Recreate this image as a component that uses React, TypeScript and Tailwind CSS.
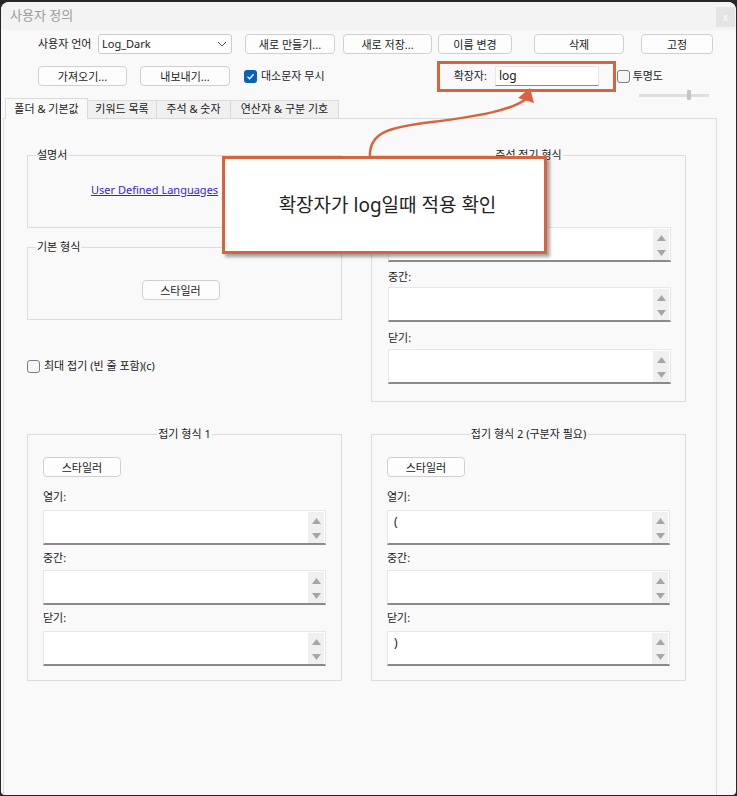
import type { ReactNode } from 'react'

const FONT = "font-['Noto_Sans','Noto_Sans_CJK_KR',sans-serif]"

function Btn({ children, className = '' }: { children: ReactNode; className?: string }) {
  return (
    <div
      className={`h-[20px] shrink-0 flex items-center justify-center bg-[#fdfdfd] border border-[#d0d0d0] rounded-[4px] text-[11px] leading-none text-[#1b1b1b] ${className}`}
    >
      {children}
    </div>
  )
}

function Check({ checked }: { checked?: boolean }) {
  if (checked) {
    return (
      <div className="w-[13px] h-[13px] shrink-0 rounded-[3px] bg-[#0b5fb5] flex items-center justify-center">
        <svg width="9" height="9" viewBox="0 0 9 9">
          <path d="M1.5 4.8 L3.6 6.8 L7.6 2.2" stroke="white" strokeWidth="1.3" fill="none" />
        </svg>
      </div>
    )
  }
  return <div className="w-[13px] h-[13px] shrink-0 rounded-[3px] bg-[#f6f6f6] border border-[#7c7c7c]" />
}

// multi-line edit with its little spin column
function Edit({ value = '' }: { value?: string }) {
  return (
    <div className="flex w-[283px] h-[35px] bg-white border border-[#e6e6e6] border-b-[#8a8a8a] border-b-[2px]">
      <div className="flex-1 pl-[6px] pt-[3px] text-[12px] leading-[16px] text-[#1b1b1b]">{value}</div>
      <div className="w-[16px] mt-[1px] mr-[1px] bg-[#f0f0f0] flex flex-col items-center pt-[6px] gap-[9px]">
        <svg width="9" height="6" viewBox="0 0 9 6">
          <path d="M4.5 0 L9 6 H0 Z" fill="#a6a6a6" />
        </svg>
        <svg width="9" height="6" viewBox="0 0 9 6">
          <path d="M0 0 H9 L4.5 6 Z" fill="#a6a6a6" />
        </svg>
      </div>
    </div>
  )
}

function Label({ children, className = '' }: { children?: ReactNode; className?: string }) {
  return <div className={`h-[16px] leading-[16px] text-[11px] text-[#1b1b1b] ${className}`}>{children}</div>
}

function FoldGroup({ title, open = '', close = '' }: { title: string; open?: string; close?: string }) {
  return (
    <fieldset className="w-[315px] h-[255px] border border-[#dcdcdc]">
      <legend className="mx-auto px-[1px] leading-[16px] text-[11px] text-[#1b1b1b]">{title}</legend>
      <div className="pl-[15px] flex flex-col">
        <Btn className="w-[78px] mt-[15px]">스타일러</Btn>
        <Label className="mt-[12px]">열기:</Label>
        <div className="mt-[5px]">
          <Edit value={open} />
        </div>
        <Label className="mt-[5px]">중간:</Label>
        <div className="mt-[4px]">
          <Edit />
        </div>
        <Label className="mt-[5px]">닫기:</Label>
        <div className="mt-[5px]">
          <Edit value={close} />
        </div>
      </div>
    </fieldset>
  )
}

export default function App() {
  const tabs = ['키워드 목록', '주석 & 숫자', '연산자 & 구분 기호']
  const tabW = ['w-[69px]', 'w-[74px]', 'w-[108px]']

  return (
    <div className={`relative w-[737px] h-[796px] bg-[#262626] pt-[2px] px-[1px] overflow-hidden ${FONT}`}>
      <div className="h-[793px] bg-[#f9f9f9] rounded-t-[8px] rounded-b-[4px] flex flex-col overflow-hidden">
        {/* title bar */}
        <div className="h-[28px] bg-[#f3f3f3] flex items-start justify-between">
          <div className="pl-[9px] pt-[4px] text-[13px] leading-[18px] text-[#9b9b9b]">사용자 정의</div>
          <div className="mt-[5px] mr-[1px] w-[19px] h-[20px] bg-[#e4e4e4] flex items-center justify-center text-[10px] text-white leading-none">
            x
          </div>
        </div>

        {/* row 1 */}
        <div className="mt-[4px] h-[20px] flex items-center">
          <div className="ml-[37px] w-[59px] text-[11px] text-[#1b1b1b]">사용자 언어</div>
          <div className="ml-[1px] w-[134px] h-[20px] bg-white border border-[#cbcbcb] rounded-[3px] flex items-center justify-between pl-[3px] pr-[4px]">
            <span className="text-[11px] text-[#1b1b1b]">Log_Dark</span>
            <svg width="10" height="6" viewBox="0 0 10 6">
              <path d="M1 1 L5 5 L9 1" stroke="#555" strokeWidth="1" fill="none" />
            </svg>
          </div>
          <Btn className="ml-[13px] w-[90px]">새로 만들기...</Btn>
          <Btn className="ml-[8px] w-[89px]">새로 저장...</Btn>
          <Btn className="ml-[6px] w-[74px]">이름 변경</Btn>
          <Btn className="ml-[22px] w-[90px]">삭제</Btn>
          <Btn className="ml-[17px] w-[72px]">고정</Btn>
        </div>

        {/* row 2 */}
        <div className="mt-[12px] h-[20px] flex items-center">
          <Btn className="ml-[37px] w-[89px]">가져오기...</Btn>
          <Btn className="ml-[13px] w-[90px]">내보내기...</Btn>
          <div className="ml-[14px]">
            <Check checked />
          </div>
          <span className="ml-[4px] text-[11px] text-[#1b1b1b]">대소문자 무시</span>
          <div className="ml-auto w-[179px] h-[31px] shrink-0 border-[3px] border-[#d6643f] flex items-center">
            <span className="ml-[14px] text-[11px] text-[#1b1b1b]">확장자:</span>
            <div className="ml-[8px] w-[104px] h-[20px] bg-white border border-[#e6e6e6] border-b-[#8a8a8a] text-[12px] leading-[17px] pl-[3px] text-[#1b1b1b]">
              log
            </div>
          </div>
          <div className="ml-[1px]">
            <Check />
          </div>
          <span className="ml-[3px] mr-[73px] text-[11px] text-[#1b1b1b]">투명도</span>
        </div>

        {/* transparency slider */}
        <div className="h-[12px] pt-[8px] pl-[638px]">
          <div className="relative w-[70px] h-[3px] bg-[#dedede]">
            <div className="absolute left-[48px] -top-[4px] w-[4px] h-[10px] bg-[#c4c4c4] rounded-[1px]" />
          </div>
        </div>

        {/* tabs */}
        <div className="relative z-10 -mb-[1px] h-[21px] flex items-end pl-[4px]">
          <div className="w-[83px] h-[21px] bg-[#f9f9f9] border-t border-x border-[#dadada] flex items-center justify-center text-[11px] text-[#1b1b1b]">
            폴더 &amp; 기본값
          </div>
          {tabs.map((t, i) => (
            <div
              key={t}
              className={`${tabW[i]} h-[19px] bg-[#f0f0f0] border border-l-0 border-[#dadada] flex items-center justify-center text-[11px] text-[#1b1b1b]`}
            >
              {t}
            </div>
          ))}
        </div>

        {/* panel */}
        <div className="ml-[2px] w-[714px] flex-1 border-t border-x border-[#dcdcdc] pl-[23px] pt-[28px]">
          <div className="flex gap-[29px]">
            <div className="w-[315px] flex flex-col">
              <fieldset className="h-[81px] border border-[#dcdcdc]">
                <legend className="ml-[8px] px-[1px] leading-[16px] text-[11px] text-[#1b1b1b]">설명서</legend>
                <div className="ml-[63px] mt-[19px] text-[11px] leading-[16px] text-[#3623d8] underline">
                  User Defined Languages
                </div>
              </fieldset>
              <fieldset className="mt-[11px] h-[81px] border border-[#dcdcdc]">
                <legend className="ml-[8px] px-[1px] leading-[16px] text-[11px] text-[#1b1b1b]">기본 형식</legend>
                <div className="mt-[25px] flex justify-center pr-[8px]">
                  <Btn className="w-[78px]">스타일러</Btn>
                </div>
              </fieldset>
              <div className="mt-[40px] h-[13px] flex items-center">
                <Check />
                <span className="ml-[4px] text-[11px] text-[#1b1b1b]">최대 접기 (빈 줄 포함)(c)</span>
              </div>
            </div>

            <fieldset className="w-[315px] h-[255px] border border-[#dcdcdc]">
              <legend className="mx-auto px-[1px] leading-[16px] text-[11px] text-[#1b1b1b]">주석 접기 형식</legend>
              <div className="pl-[16px] flex flex-col">
                {/* the "열기:" label sits under the callout here */}
                <Label className="mt-[46px]" />
                <div className="mt-[2px]">
                  <Edit />
                </div>
                <Label className="mt-[7px]">중간:</Label>
                <div className="mt-[2px]">
                  <Edit />
                </div>
                <Label className="mt-[8px]">닫기:</Label>
                <div className="mt-[3px]">
                  <Edit />
                </div>
              </div>
            </fieldset>
          </div>

          <div className="mt-[24px] flex gap-[29px]">
            <FoldGroup title="접기 형식 1" />
            <FoldGroup title="접기 형식 2 (구분자 필요)" open="(" close=")" />
          </div>
        </div>
      </div>

      {/* annotation: callout + arrow */}
      <svg className="absolute left-0 top-0 pointer-events-none" width="737" height="796" viewBox="0 0 737 796">
        <path
          d="M370 158 C 368 132, 390 127, 432 122 C 480 116, 512 110, 526 99"
          stroke="#d6643f"
          strokeWidth="2.5"
          fill="none"
        />
        <polygon points="530,88 518,98 534,103" fill="#d6643f" />
      </svg>
      <div className="absolute left-[222px] top-[156px] w-[325px] h-[98px] bg-white border-[3px] border-[#d6643f] shadow-[3px_3px_3px_rgba(0,0,0,0.35)] flex items-center justify-center">
        <span className="text-[19px] text-[#222] pl-[6px]">확장자가 log일때 적용 확인</span>
      </div>
    </div>
  )
}
